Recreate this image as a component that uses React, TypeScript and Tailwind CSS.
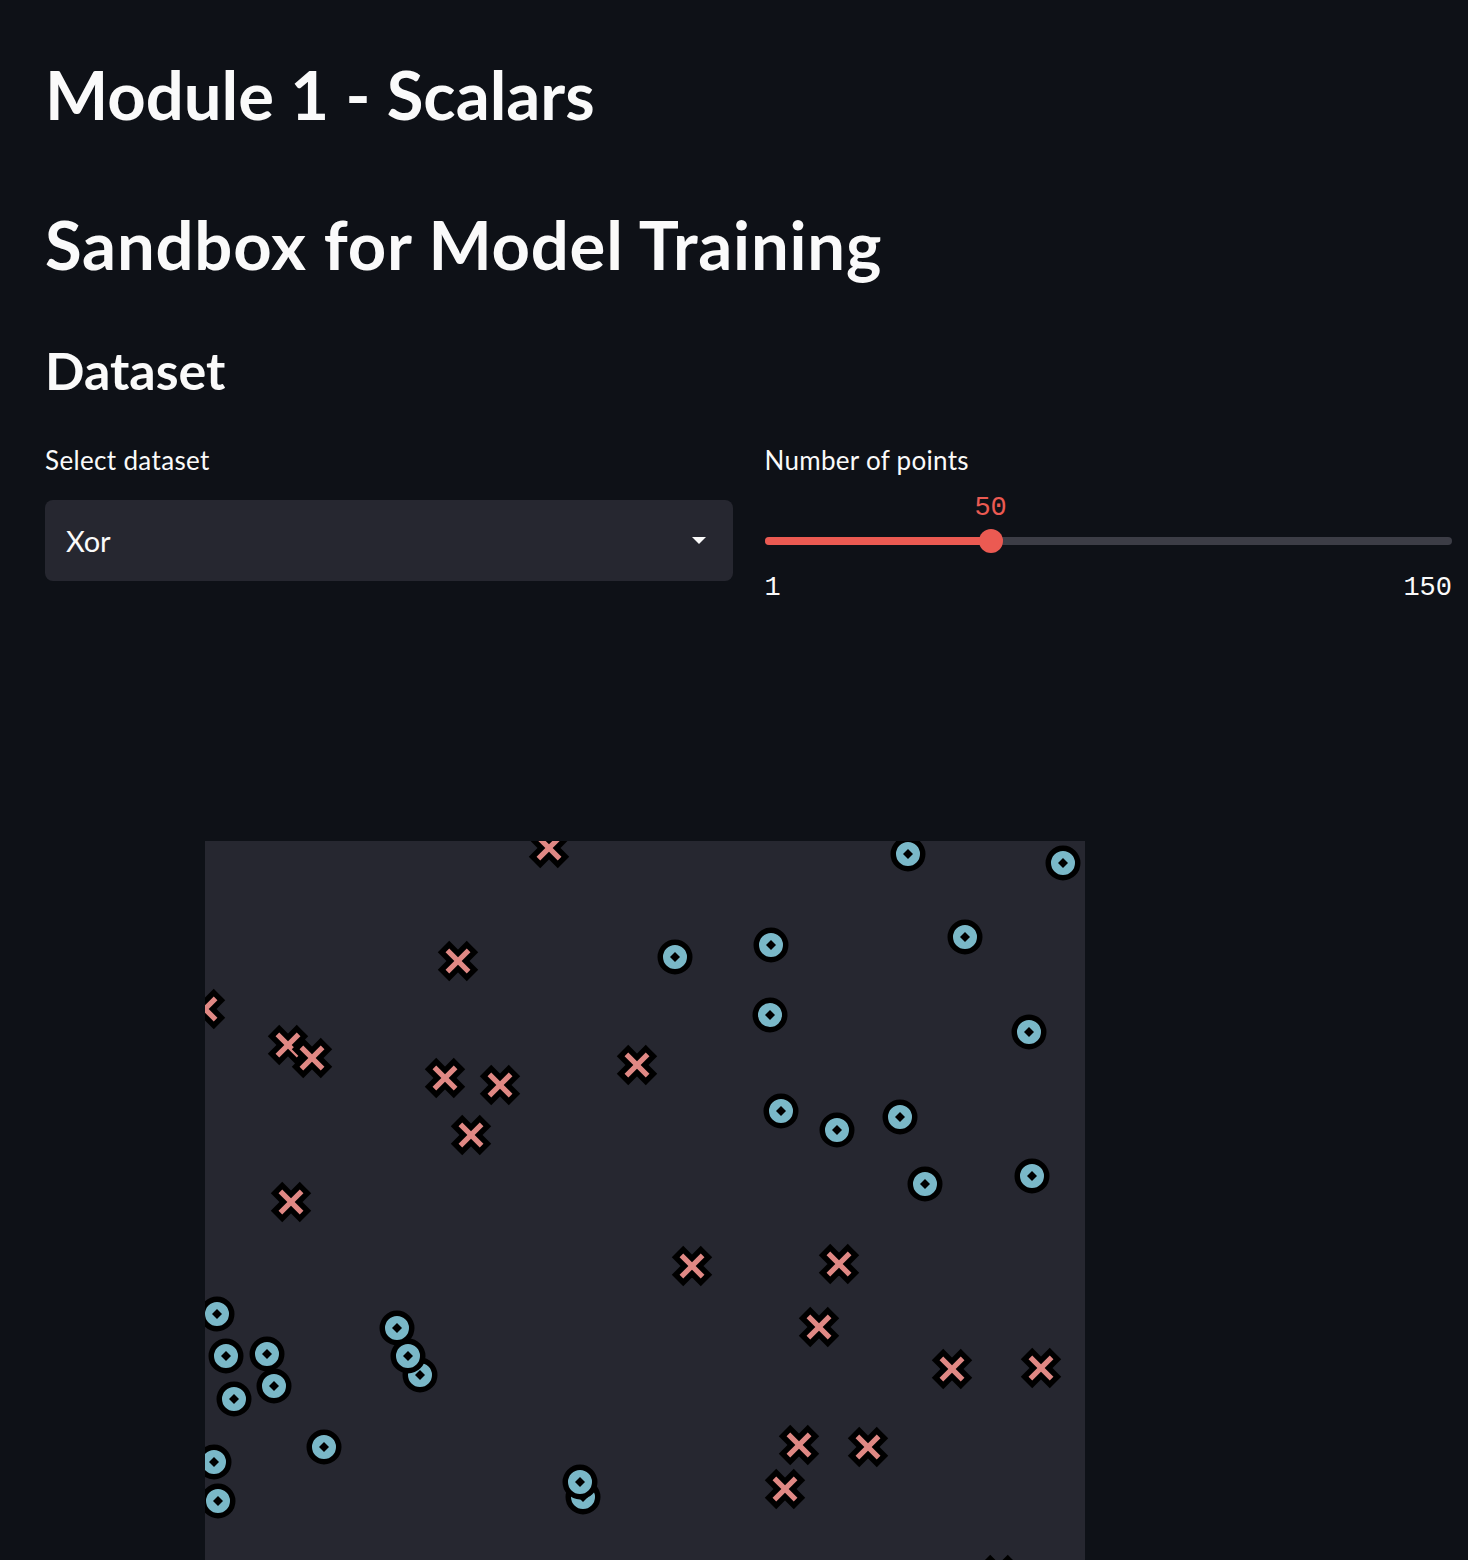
import React from 'react';

const RED = '#eb5a52';

// chart points, relative to the plot's top-left corner
const crosses: [number, number][] = [
  [344, 7], [253, 120], [0, 168], [83, 204], [107, 217], [240, 237], [295, 244],
  [432, 224], [266, 294], [86, 361], [487, 425], [634, 423], [614, 486], [747, 528],
  [836, 527], [594, 604], [663, 606], [580, 648], [794, 734],
];

const circles: [number, number][] = [
  [703, 13], [858, 22], [470, 116], [566, 104], [760, 96], [565, 174], [824, 191],
  [576, 270], [632, 289], [695, 276], [720, 343], [827, 335], [12, 473], [21, 515],
  [62, 513], [29, 558], [69, 545], [215, 534], [203, 515], [192, 487], [119, 606],
  [9, 621], [13, 660], [378, 656], [375, 641],
];

const a = 2.6;
const L = 15;
const xShape = [
  [-a, -L], [a, -L], [a, -a], [L, -a], [L, a], [a, a],
  [a, L], [-a, L], [-a, a], [-L, a], [-L, -a], [-a, -a],
]
  .map((p) => p.join(','))
  .join(' ');

function Cross({ x, y }: { x: number; y: number }) {
  return (
    <polygon
      points={xShape}
      transform={`translate(${x} ${y}) rotate(45)`}
      fill="#e08884"
      stroke="#000"
      strokeWidth={11}
      strokeLinejoin="miter"
      paintOrder="stroke"
    />
  );
}

function Dot({ x, y }: { x: number; y: number }) {
  return (
    <g transform={`translate(${x} ${y})`}>
      <circle r={14.75} fill="#7ab8c8" stroke="#000" strokeWidth={5.5} />
      <path d="M0,-5 L5,0 L0,5 L-5,0Z" fill="#000" />
    </g>
  );
}

function Slider({ value, min, max }: { value: number; min: number; max: number }) {
  const pct = ((value - min) / (max - min)) * 100;
  return (
    <div>
      <div className="relative mt-[61px] h-[8px] rounded-full bg-[#3c3d46]">
        <div className="h-full rounded-full" style={{ width: `${pct}%`, backgroundColor: RED }} />
        <div
          className="absolute top-[-8px] h-[24px] w-[24px] -translate-x-1/2 rounded-full bg-[#eb5a52]"
          style={{ left: `${pct}%` }}
        />
        <div
          className="absolute top-[-42px] -translate-x-1/2 font-['Liberation_Mono',monospace] text-[27px] leading-none text-[#eb5a52]"
          style={{ left: `${pct}%` }}
        >
          {value}
        </div>
      </div>
      <div className="mt-[30px] flex justify-between font-['Liberation_Mono',monospace] text-[27px] leading-none text-[#fafafa]">
        <span>{min}</span>
        <span>{max}</span>
      </div>
    </div>
  );
}

export default function App() {
  return (
    <div className="h-[1560px] overflow-hidden bg-[#0e1117] font-['Lato','Noto_Sans',sans-serif] text-[#fafafa]">
      <div className="pl-[45px] pr-[16px] pt-[54px]">
        <h1 className="text-[67px] font-bold leading-[80px]">Module 1 - Scalars</h1>
        <h2 className="mt-[70px] text-[67px] font-bold leading-[80px] tracking-[0.8px]">
          Sandbox for Model Training
        </h2>
        <h3 className="mt-[55px] text-[52px] font-bold leading-[62px]">Dataset</h3>

        <div className="mt-[43px] grid grid-cols-2 gap-[32px]">
          {/* Select dataset */}
          <div>
            <label className="block text-[26px] leading-[32px] tracking-[0.35px]">Select dataset</label>
            <div className="mt-[24px] flex h-[81px] items-center justify-between rounded-[8px] bg-[#262730] pl-[21px] pr-[27px]">
              <span className="text-[29px]">Xor</span>
              <svg width="14" height="7" viewBox="0 0 14 7">
                <polygon points="0,0 14,0 7,7" fill="#fafafa" />
              </svg>
            </div>
          </div>

          {/* Number of points */}
          <div>
            <label className="block text-[26px] leading-[32px] tracking-[0.3px]">Number of points</label>
            <Slider value={50} min={1} max={150} />
          </div>
        </div>

        {/* Scatter plot */}
        <div className="ml-[160px] mt-[239px] h-[880px] w-[880px] overflow-hidden bg-[#262730]">
          <svg width="880" height="880" viewBox="0 0 880 880">
            {crosses.map(([x, y], i) => (
              <Cross key={`x${i}`} x={x} y={y} />
            ))}
            {circles.map(([x, y], i) => (
              <Dot key={`o${i}`} x={x} y={y} />
            ))}
          </svg>
        </div>
      </div>
    </div>
  );
}
